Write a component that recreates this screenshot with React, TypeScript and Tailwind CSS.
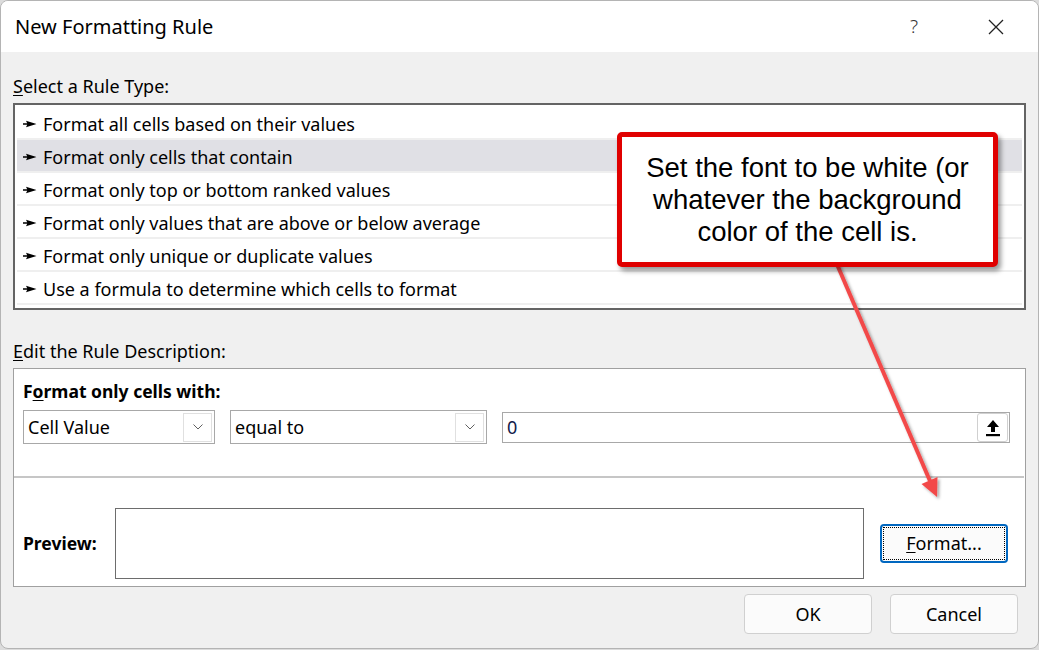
import React from 'react'

const rules = [
  'Format all cells based on their values',
  'Format only cells that contain',
  'Format only top or bottom ranked values',
  'Format only values that are above or below average',
  'Format only unique or duplicate values',
  'Use a formula to determine which cells to format',
]

function Pointer() {
  return (
    <svg width="14" height="8" viewBox="0 0 14 8" className="shrink-0">
      <path d="M0 3.3H4.2L3 0.8L13.5 4L3 7.2L4.2 4.7H0z" fill="#000" />
    </svg>
  )
}

function Chevron() {
  return (
    <svg width="10" height="6" viewBox="0 0 10 6">
      <path d="M0.5 0.5L5 5L9.5 0.5" fill="none" stroke="#606060" strokeWidth="1" />
    </svg>
  )
}

function Select({ label, width }: { label: string; width: string }) {
  return (
    <div className={`${width} h-[34px] border border-[#a8a8a8] bg-white flex items-center justify-between pl-[4px] pr-[2px]`}>
      <span className="text-[18px] text-black">{label}</span>
      <div className="w-[29px] h-[29px] border border-[#e0e0e0] flex items-center justify-center">
        <Chevron />
      </div>
    </div>
  )
}

function Btn({ children, focus }: { children: React.ReactNode; focus?: boolean }) {
  return (
    <div
      className={`w-[128px] rounded-[4px] bg-[#fbfbfb] flex items-center justify-center text-[18px] text-black ${
        focus ? 'h-[39px] border-2 border-[#0067c0] p-[1px]' : 'h-[40px] border border-[#d0d0d0]'
      }`}
    >
      {focus ? (
        <div className="w-full h-full border border-dotted border-black flex items-center justify-center">{children}</div>
      ) : (
        children
      )}
    </div>
  )
}

export default function App() {
  return (
    <div className="w-[1039px] h-[650px] bg-[#dcdcdc] relative" style={{ fontFamily: '"Noto Sans", "Open Sans", sans-serif' }}>
      <div className="w-[1039px] h-[649px] rounded-[8px] border border-[#b4b4b4] overflow-hidden flex flex-col bg-[#f0f0f0]">
        {/* title bar */}
        <div className="h-[51px] bg-white flex items-center pl-[14px] shrink-0">
          <span className="text-[20px] text-black flex-1">New Formatting Rule</span>
          <span className="text-[19px] font-light text-[#333] mr-[70px]">?</span>
          <svg width="16" height="16" viewBox="0 0 16 16" className="mr-[34px]">
            <path d="M1 1L15 15M15 1L1 15" stroke="#222" strokeWidth="1.3" />
          </svg>
        </div>

        <div className="flex-1 px-[12px] flex flex-col text-black">
          <div className="pt-[22px] leading-[24px] text-[18px]">
            <span className="underline underline-offset-2">S</span>elect a Rule Type:
          </div>

          <div className="mt-[5px] h-[207px] border-2 border-[#646464] bg-white p-[2px] flex flex-col">
            {rules.map((r, i) => (
              <div
                key={r}
                className={`h-[33px] shrink-0 border-b-2 border-[#efefef] flex items-center gap-[6px] pl-[6px] pt-[2px] ${
                  i === 1 ? 'bg-[#e0e0e5]' : ''
                }`}
              >
                <Pointer />
                <span className="text-[18px] leading-[24px]">{r}</span>
              </div>
            ))}
          </div>

          <div className="mt-[29px] leading-[24px] text-[18px]">
            <span className="underline underline-offset-2">E</span>dit the Rule Description:
          </div>

          <div className="mt-[5px] h-[219px] border border-[#a0a0a0] bg-white flex flex-col">
            <div className="pt-[10px] pl-[9px] leading-[24px] text-[17.5px] font-bold">
              F<span className="underline underline-offset-2">o</span>rmat only cells with:
            </div>
            <div className="mt-[7px] pl-[9px] flex items-start">
              <Select label="Cell Value" width="w-[192px]" />
              <div className="w-[15px]" />
              <Select label="equal to" width="w-[257px]" />
              <div className="w-[15px]" />
              <div className="mt-[2px] w-[508px] h-[31px] border border-[#a8a8a8] bg-white flex items-center justify-between pl-[4px] pr-[1px]">
                <span className="text-[18px] text-[#10204a]">0</span>
                <div className="w-[31px] h-[29px] rounded-[3px] border border-[#d0d0d0] bg-white flex items-center justify-center">
                  <svg width="16" height="18" viewBox="0 0 16 18">
                    <path d="M8 1L14 8H10V13H6V8H2z" fill="#000" />
                    <rect x="1" y="15" width="14" height="2.2" fill="#000" />
                  </svg>
                </div>
              </div>
            </div>
            <div className="mt-[32px] h-[2px] bg-[#c6c6c6] mr-[1px]" />
            <div className="mt-[30px] flex items-center pl-[9px]">
              <span className="w-[92px] text-[17.5px] font-bold">Preview:</span>
              <div className="w-[749px] h-[71px] border border-[#6d6d6d] bg-white" />
              <div className="ml-[16px]">
                <Btn focus>
                  <span>
                    <span className="underline underline-offset-2">F</span>ormat...
                  </span>
                </Btn>
              </div>
            </div>
          </div>

          <div className="mt-[7px] flex justify-end gap-[18px] pr-[8px]">
            <Btn>OK</Btn>
            <Btn>Cancel</Btn>
          </div>
        </div>
      </div>

      {/* red annotation arrow */}
      <svg className="absolute left-0 top-0 pointer-events-none" width="1039" height="650">
        <defs>
          <filter id="sh" x="-20%" y="-20%" width="140%" height="140%">
            <feDropShadow dx="2" dy="2" stdDeviation="1.6" floodColor="#000" floodOpacity="0.35" />
          </filter>
        </defs>
        <g filter="url(#sh)">
          <line x1="836" y1="262" x2="930" y2="481" stroke="#f24a4a" strokeWidth="4" />
          <polygon points="937,497 921.5,484 937.5,477" fill="#f24a4a" />
        </g>
      </svg>

      {/* callout */}
      <div className="absolute left-[617px] top-[132px] w-[381px] h-[135px] rounded-[5px] border-[5px] border-[#e00000] bg-white shadow-[3px_4px_5px_rgba(0,0,0,0.4)] flex items-center justify-center">
        <p
          className="text-center text-[27.5px] leading-[32px] text-black"
          style={{ fontFamily: '"Liberation Sans", Arial, sans-serif' }}
        >
          Set the font to be white (or
          <br />
          whatever the background
          <br />
          color of the cell is.
        </p>
      </div>
    </div>
  )
}
